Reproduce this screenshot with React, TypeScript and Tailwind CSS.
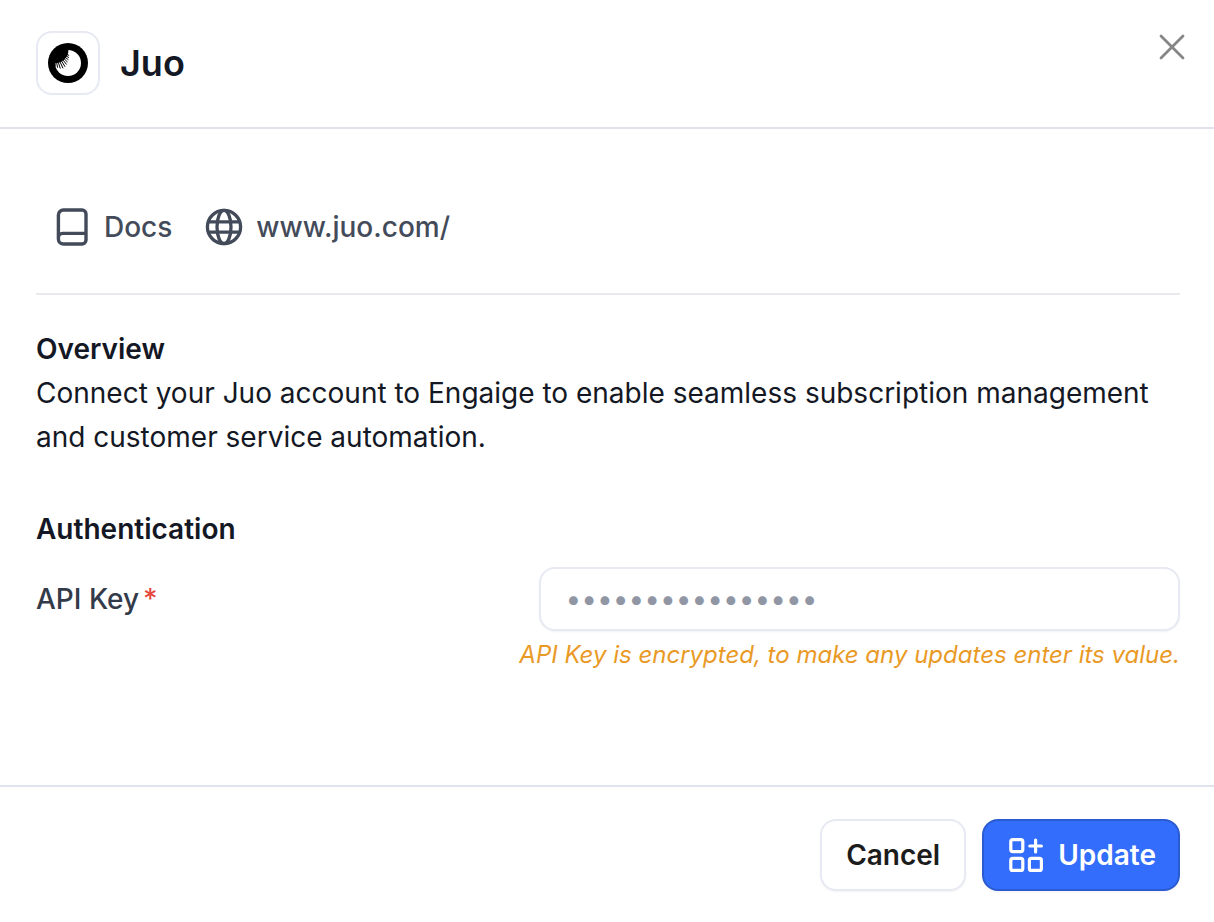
import React from "react";

function JuoLogo() {
  return (
    <svg viewBox="0 0 40 40" className="size-10" aria-hidden="true">
      <circle cx="20" cy="20" r="20" fill="#000" />
      <circle cx="20" cy="20" r="13" fill="#fff" />
      <path d="M20.4 4V7.5C20.4 14.5 14 20.2 6.6 20.2H4A16 16 0 0 1 20.4 4Z" fill="#000" />
      <path
        d="M6.9 19L7.2 23.5M8.5 18.8L9.6 24.7M10 18.4L12.3 25.5M11.5 17.8L15 25.3M12.9 17L17.1 23.8M14.2 16.1L18.6 21.5M15.4 15L19.5 19.1M16.4 13.8L20.4 16.8M17.3 12.5L20.9 14.6M18 11.1L21.1 12.4"
        fill="none"
        stroke="#000"
        strokeWidth="1"
      />
    </svg>
  );
}

function CloseIcon() {
  return (
    <svg viewBox="0 0 24 24" className="size-6 overflow-visible" fill="none" stroke="#868686" strokeWidth="2.8" strokeLinecap="round" aria-hidden="true">
      <path d="M1 1L23 23M23 1L1 23" />
    </svg>
  );
}

function BookIcon() {
  return (
    <svg viewBox="0 0 32 38" className="h-[38px] w-8" fill="none" stroke="#434b5a" strokeWidth="3.4" strokeLinejoin="round" aria-hidden="true">
      <path d="M2.4 31V7a5 5 0 0 1 5-5H26a4 4 0 0 1 4 4v26a4 4 0 0 1-4 4H7.4a5 5 0 0 1-5-5v-1.4a4.2 4.2 0 0 1 4.2-4.2H30" />
    </svg>
  );
}

function GlobeIcon() {
  return (
    <svg viewBox="-1 0 38 38" className="size-[38px] overflow-visible" fill="none" stroke="#434b5a" strokeWidth="3.3" aria-hidden="true">
      <circle cx="19" cy="19" r="16.6" />
      <ellipse cx="19" cy="19" rx="7" ry="16.6" />
      <path d="M3.4 13.8H34.6M3.4 24.2H34.6" />
    </svg>
  );
}

function UpdateIcon() {
  return (
    <svg viewBox="-1 0 34 34" className="size-[34px] overflow-visible" fill="none" stroke="#fff" strokeWidth="3.2" strokeLinecap="round" aria-hidden="true">
      <rect x="1.8" y="1.6" width="12" height="12" rx="2" />
      <rect x="1.8" y="20.4" width="12" height="12" rx="2" />
      <rect x="20.4" y="20.4" width="12" height="12" rx="2" />
      <path d="M26.6 2V14M20.8 8H32.4" />
    </svg>
  );
}

export default function App() {
  return (
    <main className="flex flex-col bg-white font-['Inter',sans-serif] text-[28px] leading-[44px] text-[#141824]">
      <header className="flex items-start justify-between border-b-2 border-[#e0e3ed] pt-[31px] pr-[34px] pb-8 pl-9">
        <div className="flex items-center gap-5">
          <div className="flex size-16 items-center justify-center rounded-2xl border-2 border-[#e7eaf2]">
            <JuoLogo />
          </div>
          <h1 className="text-4xl font-semibold">Juo</h1>
        </div>
        <button type="button" aria-label="Close" className="-mr-2 p-1">
          <CloseIcon />
        </button>
      </header>

      <div className="pt-16 pr-[34px] pb-[110px] pl-9">
        <nav className="flex items-center gap-8 border-b-2 border-[#e8eaee] px-5 pt-3 pb-11 font-medium text-[#434b5a]">
          <a href="#docs" className="flex items-center gap-4">
            <BookIcon />
            Docs
          </a>
          <a href="https://www.juo.com/" className="flex items-center gap-3.5">
            <GlobeIcon />
            www.juo.com/
          </a>
        </nav>

        <section className="pt-8">
          <h2 className="font-semibold">Overview</h2>
          <p>
            Connect your Juo account to Engaige to enable seamless subscription management and customer service
            automation.
          </p>
        </section>

        <section className="pt-12">
          <h2 className="font-semibold">Authentication</h2>
          <div className="flex items-center justify-between gap-6 pt-4">
            <label htmlFor="api-key" className="flex gap-1 font-medium text-[#333b4a]">
              <span>API Key</span>
              <span className="text-[#e5483d]">*</span>
            </label>
            <input
              id="api-key"
              type="password"
              placeholder="••••••••••••••••"
              aria-describedby="api-key-hint"
              className="h-16 w-[56%] rounded-2xl border-2 border-[#e7eaf2] bg-white px-6 shadow-xs placeholder:text-[#9096a4]"
            />
          </div>
          <p id="api-key-hint" className="pt-1 text-right text-2xl leading-10 text-[#e99a26] [font-style:oblique_10deg]">
            API Key is encrypted, to make any updates enter its value.
          </p>
        </section>
      </div>

      <footer className="flex justify-end gap-4 border-t-2 border-[#e0e3ed] py-8 pr-[34px] pl-9 font-semibold">
        <button type="button" className="h-[72px] rounded-2xl border-2 border-[#e7eaf2] bg-white px-6 text-[#1c1c1c] shadow-xs">
          Cancel
        </button>
        <button
          type="button"
          className="flex h-[72px] items-center gap-4 rounded-2xl border-2 border-[#2b5bd0] bg-[#336dfb] pr-[22px] pl-6 text-white shadow-xs"
        >
          <UpdateIcon />
          Update
        </button>
      </footer>
    </main>
  );
}
